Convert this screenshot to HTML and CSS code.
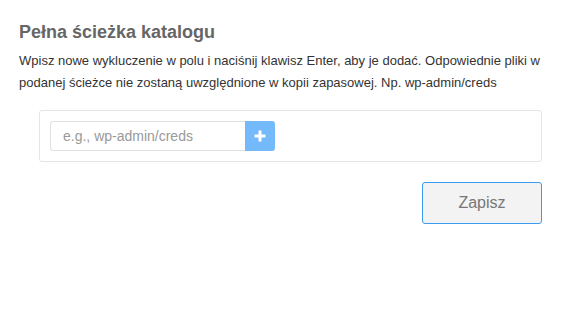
FILE: index.html
```html
<!DOCTYPE html>
<html lang="pl">
<head>
    <meta charset="UTF-8">
    <meta name="viewport" content="width=device-width, initial-scale=1.0">
    <title>Pełna ścieżka katalogu</title>
    <link rel="stylesheet" href="styles.css">
</head>
<body>

    <div class="panel">
        <!-- Heading -->
        <h2 class="panel-title">Pełna ścieżka katalogu</h2>
        <p class="panel-desc">
            Wpisz nowe wykluczenie w polu i naciśnij klawisz Enter, aby je dodać. Odpowiednie pliki w
            podanej ścieżce nie zostaną uwzględnione w kopii zapasowej. Np. wp-admin/creds
        </p>

        <!-- Exclusion input -->
        <div class="exclude-box">
            <div class="input-group">
                <input class="path-input" type="text" placeholder="e.g., wp-admin/creds">
                <button class="add-button" type="button" aria-label="Dodaj">
                    <svg width="12" height="12" viewBox="0 0 12 12">
                        <path d="M6 0.5v11M0.5 6h11" stroke="#fff" stroke-width="3"/>
                    </svg>
                </button>
            </div>
        </div>

        <div class="actions">
            <button class="save-button" type="button">Zapisz</button>
        </div>
    </div>

</body>
</html>
```

FILE: styles.css
```css
body {
    margin: 0;
    font-family: 'Liberation Sans', Arial, sans-serif;
    background: #fff;
}
.panel {
    padding: 20px 27px 0 19px;
}
.panel-title {
    margin: 0;
    font-size: 18px;
    font-weight: bold;
    color: #666;
    line-height: 25px;
}
.panel-desc {
    margin: 5px 0 0;
    font-size: 13px;
    line-height: 22px;
    color: #333;
}
.exclude-box {
    margin: 16px 0 0 20px;
    border: 1px solid #e5e5e5;
    border-radius: 3px;
    padding: 10px;
}
.input-group {
    display: flex;
}
.path-input {
    width: 195px;
    height: 30px;
    box-sizing: border-box;
    border: 1px solid #e2e2e2;
    border-right: none;
    border-radius: 3px 0 0 3px;
    padding: 0 12px;
    font-family: inherit;
    font-size: 14px;
    color: #333;
    outline: none;
}
.path-input::placeholder {
    color: #999;
}
.add-button {
    width: 30px;
    height: 30px;
    border: none;
    border-radius: 0 3px 3px 0;
    background-color: #74b9fa;
    display: flex;
    align-items: center;
    justify-content: center;
    padding: 0;
    cursor: pointer;
}
.actions {
    display: flex;
    justify-content: flex-end;
    margin-top: 20px;
}
.save-button {
    width: 120px;
    height: 42px;
    background-color: #f3f3f3;
    border: 1px solid #3a9bef;
    border-radius: 3px;
    font-family: inherit;
    font-size: 16px;
    color: #777;
    cursor: pointer;
}
```
